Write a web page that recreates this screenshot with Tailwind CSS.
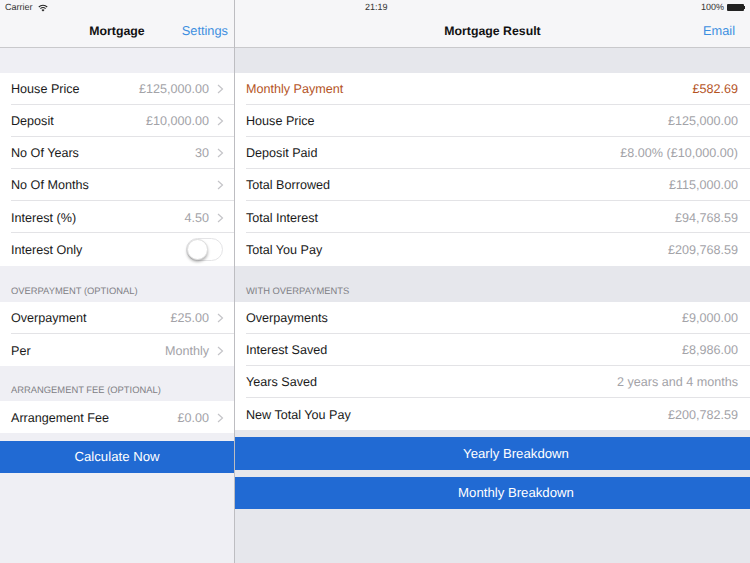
<!DOCTYPE html>
<html><head><meta charset="utf-8"><script src="https://cdn.jsdelivr.net/npm/@tailwindcss/browser@4"></script></head>
<body class="m-0">
<div class="relative w-[750px] h-[563px] overflow-hidden flex font-['Liberation_Sans',Arial,sans-serif] text-[12.6px] text-[#1a1a1a] bg-[#e6e7ec] antialiased [text-rendering:geometricPrecision]">
  <!-- status bar -->
  <div class="absolute top-0 left-0 w-full h-[15px] flex items-center justify-between pl-[5px] pr-[5px] text-[9px] text-[#333] z-10">
    <div class="flex items-center gap-[5px]"><span>Carrier</span>
      <svg width="10" height="8" viewBox="0 0 10 8"><path d="M5 7.6 3.5 5.9a2.2 2.2 0 0 1 3 0Z" fill="#222"/><path d="M2.4 4.7a3.8 3.8 0 0 1 5.2 0M.8 3a6 6 0 0 1 8.4 0" stroke="#222" stroke-width="1.1" fill="none"/></svg>
    </div>
    <span class="absolute left-[365px]">21:19</span>
    <div class="flex items-center gap-[3px]"><span>100%</span>
      <span class="flex items-center"><span class="block w-[17px] h-[7px] bg-[#222] rounded-[1px]"></span><span class="block w-[1px] h-[3px] bg-[#222]"></span></span>
    </div>
  </div>

  <!-- left -->
  <div class="w-[234px] shrink-0 h-full bg-[#efeff4]">
    <div class="relative h-[48px] bg-[#f6f6f8] border-b border-[#c9c9cc] flex items-end justify-center pb-[7px]">
      <span class="font-bold text-[12.3px] text-[#111] leading-[18px]">Mortgage</span>
      <span class="absolute right-[6px] bottom-[7px] text-[#3d8fe0] text-[12.8px] leading-[18px]">Settings</span>
    </div>
    <div class="h-[24.5px]"></div>
    <div class="bg-white flex flex-col">
      <div class="h-[32.2px] flex items-center pl-[11px]"><div class="flex-1 h-full flex items-center border-b border-[#e3e3e6] pr-[10px] pt-[2.5px]"><span class="flex-1">House Price</span><span class="text-[#a3a3a8]">£125,000.00</span><svg class="ml-[8px] -mt-[1px]" width="7" height="10" viewBox="0 0 7 10"><path d="M1 1l4.5 4L1 9" stroke="#c4c4c8" stroke-width="1.2" fill="none"/></svg></div></div>
      <div class="h-[32.2px] flex items-center pl-[11px]"><div class="flex-1 h-full flex items-center border-b border-[#e3e3e6] pr-[10px] pt-[2.5px]"><span class="flex-1">Deposit</span><span class="text-[#a3a3a8]">£10,000.00</span><svg class="ml-[8px] -mt-[1px]" width="7" height="10" viewBox="0 0 7 10"><path d="M1 1l4.5 4L1 9" stroke="#c4c4c8" stroke-width="1.2" fill="none"/></svg></div></div>
      <div class="h-[32.2px] flex items-center pl-[11px]"><div class="flex-1 h-full flex items-center border-b border-[#e3e3e6] pr-[10px] pt-[2.5px]"><span class="flex-1">No Of Years</span><span class="text-[#a3a3a8]">30</span><svg class="ml-[8px] -mt-[1px]" width="7" height="10" viewBox="0 0 7 10"><path d="M1 1l4.5 4L1 9" stroke="#c4c4c8" stroke-width="1.2" fill="none"/></svg></div></div>
      <div class="h-[32.2px] flex items-center pl-[11px]"><div class="flex-1 h-full flex items-center border-b border-[#e3e3e6] pr-[10px] pt-[2.5px]"><span class="flex-1">No Of Months</span><svg class="ml-[8px] -mt-[1px]" width="7" height="10" viewBox="0 0 7 10"><path d="M1 1l4.5 4L1 9" stroke="#c4c4c8" stroke-width="1.2" fill="none"/></svg></div></div>
      <div class="h-[32.2px] flex items-center pl-[11px]"><div class="flex-1 h-full flex items-center border-b border-[#e3e3e6] pr-[10px] pt-[2.5px]"><span class="flex-1">Interest (%)</span><span class="text-[#a3a3a8]">4.50</span><svg class="ml-[8px] -mt-[1px]" width="7" height="10" viewBox="0 0 7 10"><path d="M1 1l4.5 4L1 9" stroke="#c4c4c8" stroke-width="1.2" fill="none"/></svg></div></div>
      <div class="h-[32.2px] flex items-center pl-[11px] pr-[11px]"><span class="flex-1 pt-[2.5px]">Interest Only</span>
        <div class="relative w-[37px] h-[23px] rounded-full border border-[#e4e4e6] bg-white"><div class="absolute left-0 top-0 w-[21px] h-[21px] rounded-full bg-white border border-[#ddd] shadow-[0_2px_3px_rgba(0,0,0,0.3)]"></div></div>
      </div>
    </div>
    <div class="h-[36px] flex items-end pl-[11px] pb-[5px] text-[9.4px] leading-[12px] text-[#808085]">OVERPAYMENT (OPTIONAL)</div>
    <div class="bg-white flex flex-col">
      <div class="h-[32.2px] flex items-center pl-[11px]"><div class="flex-1 h-full flex items-center border-b border-[#e3e3e6] pr-[10px] pt-[2.5px]"><span class="flex-1">Overpayment</span><span class="text-[#a3a3a8]">£25.00</span><svg class="ml-[8px] -mt-[1px]" width="7" height="10" viewBox="0 0 7 10"><path d="M1 1l4.5 4L1 9" stroke="#c4c4c8" stroke-width="1.2" fill="none"/></svg></div></div>
      <div class="h-[32.2px] flex items-center pl-[11px] pr-[10px] pt-[2.5px]"><span class="flex-1">Per</span><span class="text-[#a3a3a8]">Monthly</span><svg class="ml-[8px] -mt-[1px]" width="7" height="10" viewBox="0 0 7 10"><path d="M1 1l4.5 4L1 9" stroke="#c4c4c8" stroke-width="1.2" fill="none"/></svg></div>
    </div>
    <div class="h-[35px] flex items-end pl-[11px] pb-[5px] text-[9.4px] leading-[12px] text-[#808085]">ARRANGEMENT FEE (OPTIONAL)</div>
    <div class="bg-white h-[32.2px] flex items-center pl-[11px] pr-[10px] pt-[2.5px]"><span class="flex-1">Arrangement Fee</span><span class="text-[#a3a3a8]">£0.00</span><svg class="ml-[8px] -mt-[1px]" width="7" height="10" viewBox="0 0 7 10"><path d="M1 1l4.5 4L1 9" stroke="#c4c4c8" stroke-width="1.2" fill="none"/></svg></div>
    <div class="h-[8px]"></div>
    <div class="h-[32px] bg-[#216ad3] text-white text-[13.2px] flex items-center justify-center">Calculate Now</div>
  </div>

  <!-- right -->
  <div class="flex-1 h-full border-l border-[#bdbdc1] bg-[#e6e7ec]">
    <div class="relative h-[48px] bg-[#f6f6f8] border-b border-[#c9c9cc] flex items-end justify-center pb-[7px]">
      <span class="font-bold text-[12.3px] text-[#111] leading-[18px]">Mortgage Result</span>
      <span class="absolute right-[15px] bottom-[7px] text-[#3d8fe0] text-[12.8px] leading-[18px]">Email</span>
    </div>
    <div class="h-[24.5px]"></div>
    <div class="bg-white flex flex-col">
      <div class="h-[32.2px] pl-[11px]"><div class="h-full flex items-center justify-between border-b border-[#e3e3e6] pr-[12px] pt-[2.5px] text-[#b4541f]"><span>Monthly Payment</span><span>£582.69</span></div></div>
      <div class="h-[32.2px] pl-[11px]"><div class="h-full flex items-center justify-between border-b border-[#e3e3e6] pr-[12px] pt-[2.5px]"><span>House Price</span><span class="text-[#a3a3a8]">£125,000.00</span></div></div>
      <div class="h-[32.2px] pl-[11px]"><div class="h-full flex items-center justify-between border-b border-[#e3e3e6] pr-[12px] pt-[2.5px]"><span>Deposit Paid</span><span class="text-[#a3a3a8]">£8.00% (£10,000.00)</span></div></div>
      <div class="h-[32.2px] pl-[11px]"><div class="h-full flex items-center justify-between border-b border-[#e3e3e6] pr-[12px] pt-[2.5px]"><span>Total Borrowed</span><span class="text-[#a3a3a8]">£115,000.00</span></div></div>
      <div class="h-[32.2px] pl-[11px]"><div class="h-full flex items-center justify-between border-b border-[#e3e3e6] pr-[12px] pt-[2.5px]"><span>Total Interest</span><span class="text-[#a3a3a8]">£94,768.59</span></div></div>
      <div class="h-[32.2px] pl-[11px] pr-[12px] pt-[2.5px] flex items-center justify-between"><span>Total You Pay</span><span class="text-[#a3a3a8]">£209,768.59</span></div>
    </div>
    <div class="h-[36px] flex items-end pl-[11px] pb-[5px] text-[9.4px] leading-[12px] text-[#808085]">WITH OVERPAYMENTS</div>
    <div class="bg-white flex flex-col">
      <div class="h-[32.2px] pl-[11px]"><div class="h-full flex items-center justify-between border-b border-[#e3e3e6] pr-[12px] pt-[2.5px]"><span>Overpayments</span><span class="text-[#a3a3a8]">£9,000.00</span></div></div>
      <div class="h-[32.2px] pl-[11px]"><div class="h-full flex items-center justify-between border-b border-[#e3e3e6] pr-[12px] pt-[2.5px]"><span>Interest Saved</span><span class="text-[#a3a3a8]">£8,986.00</span></div></div>
      <div class="h-[32.2px] pl-[11px]"><div class="h-full flex items-center justify-between border-b border-[#e3e3e6] pr-[12px] pt-[2.5px]"><span>Years Saved</span><span class="text-[#a3a3a8]">2 years and 4 months</span></div></div>
      <div class="h-[32.2px] pl-[11px] pr-[12px] pt-[2.5px] flex items-center justify-between"><span>New Total You Pay</span><span class="text-[#a3a3a8]">£200,782.59</span></div>
    </div>
    <div class="h-[6.5px]"></div>
    <div class="h-[33px] bg-[#216ad3] text-white text-[13.2px] flex items-center justify-center pl-[47px] pt-[1px]">Yearly Breakdown</div>
    <div class="h-[7px]"></div>
    <div class="h-[32px] bg-[#216ad3] text-white text-[13.2px] flex items-center justify-center pl-[47px] pt-[1px]">Monthly Breakdown</div>
  </div>
</div>
</body></html>
